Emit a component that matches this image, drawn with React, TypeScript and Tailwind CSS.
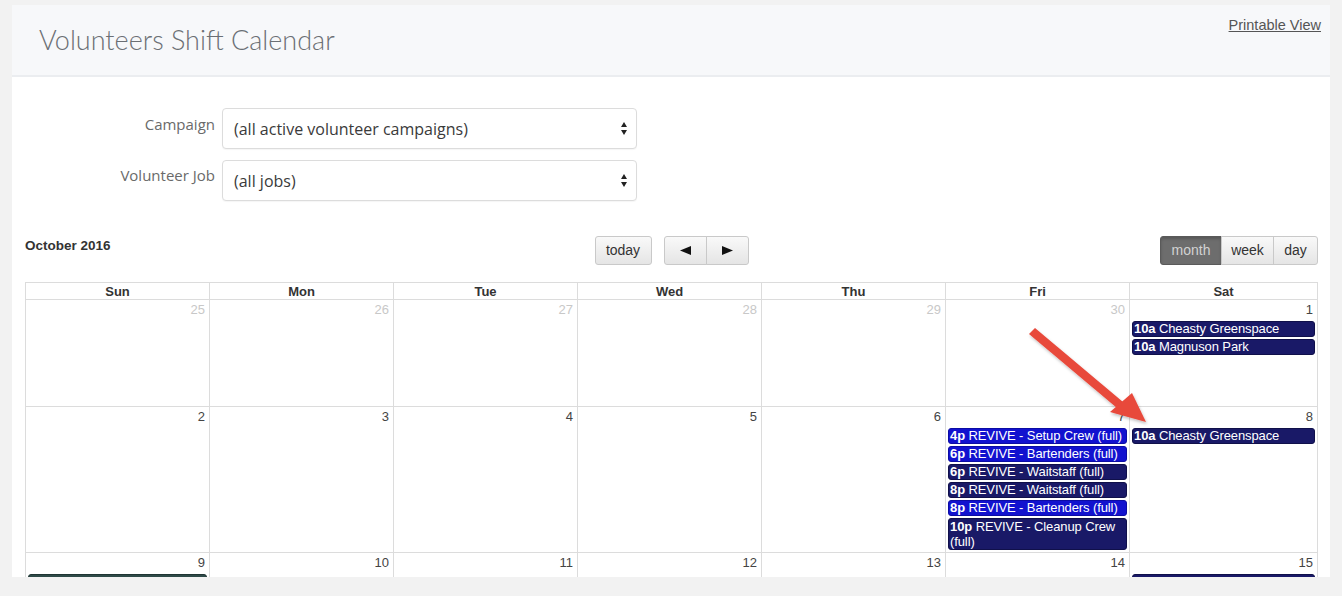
import { ReactNode } from "react";

type Ev = { time: string; title: string; color: "navy" | "blue" | "slate"; wrap?: boolean };

type Day = { n: number; muted?: boolean; events?: Ev[] };

const weeks: { height: string; days: Day[] }[] = [
  {
    height: "h-[107px]",
    days: [
      { n: 25, muted: true },
      { n: 26, muted: true },
      { n: 27, muted: true },
      { n: 28, muted: true },
      { n: 29, muted: true },
      { n: 30, muted: true },
      {
        n: 1,
        events: [
          { time: "10a", title: "Cheasty Greenspace", color: "navy" },
          { time: "10a", title: "Magnuson Park", color: "navy" },
        ],
      },
    ],
  },
  {
    height: "h-[146px]",
    days: [
      { n: 2 },
      { n: 3 },
      { n: 4 },
      { n: 5 },
      { n: 6 },
      {
        n: 7,
        events: [
          { time: "4p", title: "REVIVE - Setup Crew (full)", color: "blue" },
          { time: "6p", title: "REVIVE - Bartenders (full)", color: "blue" },
          { time: "6p", title: "REVIVE - Waitstaff (full)", color: "navy" },
          { time: "8p", title: "REVIVE - Waitstaff (full)", color: "navy" },
          { time: "8p", title: "REVIVE - Bartenders (full)", color: "blue" },
          { time: "10p", title: "REVIVE - Cleanup Crew (full)", color: "navy", wrap: true },
        ],
      },
      { n: 8, events: [{ time: "10a", title: "Cheasty Greenspace", color: "navy" }] },
    ],
  },
  {
    height: "h-[60px]",
    days: [
      { n: 9, events: [{ time: "", title: "", color: "slate" }] },
      { n: 10 },
      { n: 11 },
      { n: 12 },
      { n: 13 },
      { n: 14 },
      { n: 15, events: [{ time: "", title: "", color: "navy" }] },
    ],
  },
];

const colorCls = {
  navy: "bg-[#191967] border-[#10104a]",
  blue: "bg-[#1212cf] border-[#0c0ca4]",
  slate: "bg-[#2e4a48] border-[#1f3533]",
};

function SelectBox({ value }: { value: string }) {
  return (
    <div className="flex h-[41px] w-[415px] items-center justify-between rounded-[4px] border border-[#dcdcdc] bg-white pl-[11px] pr-[9px] shadow-[0_1px_1px_rgba(0,0,0,0.04)]">
      <span className="text-[16px] text-[#3a3a3a]">{value}</span>
      <span className="flex flex-col items-center gap-[3px] text-[#222]">
        <svg width="6" height="5" viewBox="0 0 6 5"><path d="M3 0L6 5H0z" fill="currentColor" /></svg>
        <svg width="6" height="5" viewBox="0 0 6 5"><path d="M0 0h6L3 5z" fill="currentColor" /></svg>
      </span>
    </div>
  );
}

function Btn({ children, className = "", active = false }: { children: ReactNode; className?: string; active?: boolean }) {
  return (
    <div
      className={
        "flex h-[29px] items-center justify-center border text-[14px] " +
        (active
          ? "border-[#5a5a5a] bg-[#6d6d6d] text-[#d2d2d2] shadow-[inset_0_2px_3px_rgba(0,0,0,0.2)] "
          : "border-[#c9c9c9] bg-gradient-to-b from-[#f9f9f9] to-[#e5e5e5] text-[#333] ") +
        className
      }
    >
      {children}
    </div>
  );
}

function Event({ ev }: { ev: Ev }) {
  return (
    <div
      className={
        "mx-[2px] mb-[2px] rounded-[3px] border px-[1px] text-[13px] tracking-[-0.1px] text-white " +
        (ev.wrap ? "leading-[15px] " : "leading-[14px] ") +
        colorCls[ev.color]
      }
    >
      <span className="font-bold">{ev.time}</span>
      {ev.time ? " " : "\u00a0"}
      {ev.title}
    </div>
  );
}

export default function App() {
  return (
    <div className="relative h-[596px] w-[1342px] overflow-hidden bg-[#f2f2f2] pl-[12px] pt-[5px] font-['Open_Sans',sans-serif]">
      <div className="w-[1318px] bg-white">
        <div className="flex h-[72px] items-start justify-between border-b-2 border-[#ebedf0] bg-[#f7f8fa] pl-[27px] pr-[9px]">
          <h1 className="mt-[15px] font-['Lato',sans-serif] text-[27px] font-light text-[#6b6f74]">
            Volunteers Shift Calendar
          </h1>
          <a className="mt-[10px] font-['Liberation_Sans',sans-serif] text-[14.5px] text-[#555] underline">Printable View</a>
        </div>

        <div className="h-[500px] pl-[13px] pt-[31px]">
          <div className="flex flex-col gap-[11px]">
            <div className="flex items-start">
              <label className="w-[197px] pr-[7px] pt-[5px] text-right text-[15px] text-[#6a6a6a]">Campaign</label>
              <SelectBox value="(all active volunteer campaigns)" />
            </div>
            <div className="flex items-start">
              <label className="w-[197px] pr-[7px] pt-[4px] text-right text-[15px] text-[#6a6a6a]">Volunteer Job</label>
              <SelectBox value="(all jobs)" />
            </div>
          </div>

          <div className="mt-[35px] w-[1293px] font-['Liberation_Sans',sans-serif]">
            <div className="flex h-[29px] items-start">
              <div className="flex-1 text-[13.5px] font-bold text-[#333]">October 2016</div>
              <div className="flex gap-[12px]">
                <Btn className="w-[57px] rounded-[3px]">today</Btn>
                <div className="flex">
                  <Btn className="w-[43px] rounded-l-[3px]">
                    <svg width="11" height="9" viewBox="0 0 11 9"><path d="M0 4.5L11 0v9z" fill="#111" /></svg>
                  </Btn>
                  <Btn className="-ml-px w-[43px] rounded-r-[3px]">
                    <svg width="11" height="9" viewBox="0 0 11 9"><path d="M11 4.5L0 0v9z" fill="#111" /></svg>
                  </Btn>
                </div>
              </div>
              <div className="flex flex-1 justify-end">
                <Btn active className="w-[62px] rounded-l-[3px]">month</Btn>
                <Btn className="-ml-px w-[53px]">week</Btn>
                <Btn className="-ml-px w-[45px] rounded-r-[3px]">day</Btn>
              </div>
            </div>

            <div className="mt-[17px] w-[1293px] border-l border-t border-[#dcdcdc]">
              <div className="grid grid-cols-[184px_184px_184px_184px_184px_184px_1fr]">
                {["Sun", "Mon", "Tue", "Wed", "Thu", "Fri", "Sat"].map((d) => (
                  <div key={d} className="h-[17px] border-b border-r border-[#dcdcdc] text-center text-[13px] font-bold leading-[17px] text-[#333]">
                    {d}
                  </div>
                ))}
              </div>
              {weeks.map((w, i) => (
                <div key={i} className="grid grid-cols-[184px_184px_184px_184px_184px_184px_1fr]">
                  {w.days.map((d) => (
                    <div key={d.n} className={"overflow-hidden border-b border-r border-[#dcdcdc] " + w.height}>
                      <div className={"pr-[4px] pt-[2px] text-right text-[13px] leading-[16px] " + (d.muted ? "text-[#c8c8c8]" : "text-[#444]")}>
                        {d.n}
                      </div>
                      <div className="pt-[3px]">
                        {d.events?.map((ev, j) => <Event key={j} ev={ev} />)}
                      </div>
                    </div>
                  ))}
                </div>
              ))}
            </div>
          </div>
        </div>
      </div>

      <div className="absolute bottom-0 left-0 h-[19px] w-full bg-[#f2f2f2]" />

      <svg className="absolute left-[1018px] top-[326px]" width="140" height="110" viewBox="0 0 140 110">
        <defs>
          <filter id="sh" x="-20%" y="-20%" width="140%" height="140%">
            <feDropShadow dx="1" dy="2" stdDeviation="1.5" floodColor="#000" floodOpacity="0.25" />
          </filter>
        </defs>
        <g filter="url(#sh)" fill="#e8483b">
          <path d="M11 8 L17 2 L105 76 L99 82 Z" />
          <path d="M92 86 L114 67 L128 96 Z" />
        </g>
      </svg>
    </div>
  );
}
